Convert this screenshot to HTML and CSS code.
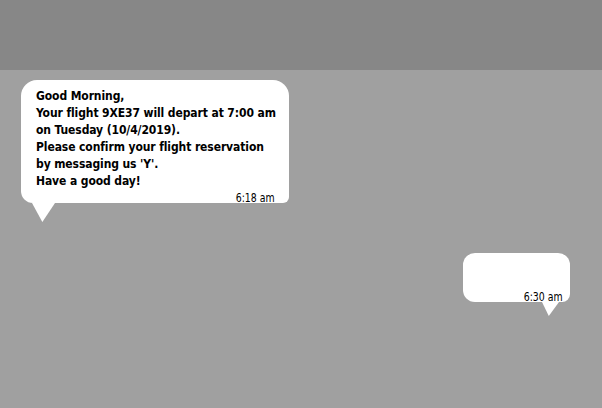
FILE: index.html
```html
<!DOCTYPE html>
<html>
<head>
<meta charset="utf-8">
<link rel="stylesheet" href="styles.css">
</head>
<body>
<div class="header"></div>
<div class="chat">
  <div class="bubble incoming">
    <p class="msg">Good Morning,<br>Your flight 9XE37 will depart at 7:00 am<br>on Tuesday (10/4/2019).<br>Please confirm your flight reservation<br>by messaging us 'Y'.<br>Have a good day!</p>
    <span class="time">6:18 am</span>
  </div>
  <div class="bubble outgoing">
    <span class="time">6:30 am</span>
  </div>
</div>
</body>
</html>
```
FILE: styles.css
```css
html, body {
  margin: 0;
  padding: 0;
}
body {
  background: #a0a0a0;
  width: 602px;
  height: 408px;
  overflow: hidden;
  font-family: "DejaVu Sans Condensed", "DejaVu Sans", sans-serif;
}
.header {
  height: 70px;
  background: #878787;
}
.chat {
  display: flex;
  flex-direction: column;
  align-items: flex-start;
  padding: 10px 32px 0 21px;
}
.bubble {
  position: relative;
  background: #fff;
}
.incoming {
  width: 268px;
  box-sizing: border-box;
  padding: 8px 10px 13px 15px;
  border-radius: 16px 16px 6px 12px;
}
.msg {
  margin: 0;
  font-size: 12px;
  line-height: 17px;
  font-weight: bold;
  letter-spacing: -0.1px;
  color: #000;
  white-space: nowrap;
  -webkit-font-smoothing: none;
}
.time {
  position: absolute;
  bottom: 0;
  font-family: "DejaVu Sans Condensed", sans-serif;
  font-size: 13px;
  line-height: 10px;
  color: #000;
  background: #fff;
  white-space: nowrap;
  transform: scaleX(0.8);
  transform-origin: right bottom;
}
.incoming .time {
  right: 14px;
}
.incoming::after {
  content: "";
  position: absolute;
  left: 11px;
  top: 100%;
  width: 23px;
  height: 19px;
  background: #fff;
  clip-path: polygon(0 0, 100% 0, 45% 100%);
}
.outgoing {
  align-self: flex-end;
  margin-top: 50px;
  width: 107px;
  height: 49px;
  border-radius: 12px 12px 8px 12px;
}
.outgoing .time {
  right: 7px;
}
.outgoing::after {
  content: "";
  position: absolute;
  left: 79px;
  top: 100%;
  width: 17px;
  height: 14px;
  background: #fff;
  clip-path: polygon(0 0, 100% 0, 40% 100%);
}
```
